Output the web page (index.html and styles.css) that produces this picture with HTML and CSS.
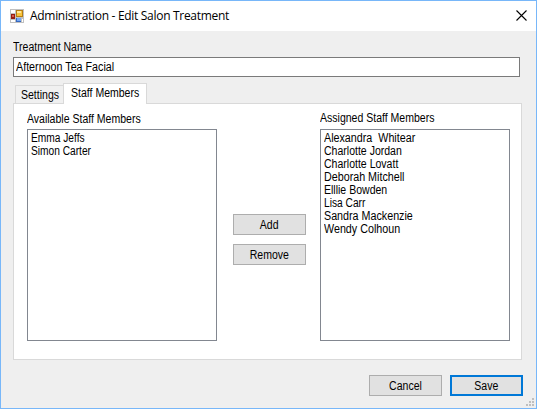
FILE: index.html
```html
<!DOCTYPE html>
<html lang="en">
<head>
<meta charset="utf-8">
<title>Administration - Edit Salon Treatment</title>
<link rel="stylesheet" href="styles.css">
</head>
<body>
<div class="window">
  <header class="titlebar">
    <svg class="app-icon" width="14" height="14" viewBox="0 0 14 14" shape-rendering="crispEdges">
      <path fill="#c0c0c0" d="M0 0h14v14H0z"/>
      <path fill="#fff" d="M1 1h4v3H1zM1 11h4v2H1zM12 10h1v3h-1z"/>
      <path fill="#b57d13" d="M6 1h7v7H6z"/>
      <path fill="#f8c43c" d="M7 2h5v5H7z"/>
      <path fill="#ffe79a" d="M7 2h4v2H7z"/>
      <path fill="#941c12" d="M1 5h4v5H1z"/>
      <path fill="#d85a4c" d="M2 6h2v2H2z"/>
      <path fill="#3568c0" d="M6 9h5v4H6z"/>
      <path fill="#75a8f4" d="M7 9h4v3H7z"/>
    </svg>
    <h1 class="title">Administration - Edit Salon Treatment</h1>
    <svg class="close" width="11" height="11" viewBox="0 0 11 11"><path d="M.5 .5l10 10M10.500 .5l-10 10" stroke="#000" stroke-width="1.100" fill="none"/></svg>
  </header>
  <main class="content">
    <div class="field-label"><span class="text">Treatment Name</span></div>
    <div class="field"><span class="text wide">Afternoon Tea Facial</span></div>
    <nav class="tabs">
      <div class="tab"><span class="text">Settings</span></div>
      <div class="tab active"><span class="text">Staff Members</span></div>
    </nav>
    <section class="panel">
      <div class="column">
        <div class="list-label lower"><span class="text">Available Staff Members</span></div>
        <ul class="list">
          <li><span class="text snug">Emma Jeffs</span></li>
          <li><span class="text snug">Simon Carter</span></li>
        </ul>
      </div>
      <div class="transfer">
        <button class="button"><span class="text">Add</span></button>
        <button class="button"><span class="text">Remove</span></button>
      </div>
      <div class="column">
        <div class="list-label"><span class="text">Assigned Staff Members</span></div>
        <ul class="list">
          <li><span class="text wide">Alexandra  Whitear</span></li>
          <li><span class="text">Charlotte Jordan</span></li>
          <li><span class="text">Charlotte Lovatt</span></li>
          <li><span class="text wide">Deborah Mitchell</span></li>
          <li><span class="text">Elllie Bowden</span></li>
          <li><span class="text snug">Lisa Carr</span></li>
          <li><span class="text wide">Sandra Mackenzie</span></li>
          <li><span class="text wide">Wendy Colhoun</span></li>
        </ul>
      </div>
    </section>
    <footer class="actions">
      <button class="button"><span class="text">Cancel</span></button>
      <button class="button primary"><span class="text">Save</span></button>
    </footer>
  </main>
  <svg class="grip" width="8" height="8" viewBox="0 0 8 8" shape-rendering="crispEdges"><path fill="#bfbfbf" d="M6 0h2v2H6zM3 3h2v2H3zM6 3h2v2H6zM0 6h2v2H0zM3 6h2v2H3zM6 6h2v2H6z"/></svg>
</div>
</body>
</html>
```
FILE: styles.css
```css
* { box-sizing: border-box; }
body { margin: 0; font: 12.5px/13px "Liberation Sans", sans-serif; color: #000; }
.window { position: relative; width: 537px; height: 409px; border: 1px solid #78b7f9; background: #efefef; }
.text { display: inline-block; vertical-align: top; white-space: pre; transform: scaleX(0.842); transform-origin: left; }
.text.snug { transform: scaleX(0.815); }
.text.wide { transform: scaleX(0.858); }
.titlebar { display: flex; align-items: center; height: 30px; padding: 0 9px; background: #fff; }
.app-icon { margin-top: -1px; }
.title { flex: 1; margin: 0 0 0 6px; font: 12px/16px "Open Sans", "Noto Sans", sans-serif; letter-spacing: -0.3px; }
.close { margin-top: -2px; }
.content { padding: 10px 13px 0 12px; }
.field-label { height: 16px; }
.field { width: 507px; height: 20px; padding: 3px 2px; border: 1px solid #7a7a7a; background: #fff; }
.tabs { display: flex; align-items: flex-end; height: 26px; padding-left: 2px; }
.tab { width: 48px; height: 18px; padding: 3px 0 0 5px; border: 1px solid #d9d9d9; border-width: 1px 0 0 1px; background: #f0f0f0; }
.tab.active { position: relative; width: 84px; height: 21px; margin-bottom: -1px; padding: 3px 0 0 7px; border-width: 1px 1px 0; background: #fff; }
.panel { display: flex; width: 509px; height: 257px; padding: 8px 11px 0 13px; border: 1px solid #d9d9d9; background: #fff; }
.column { width: 190px; }
.list-label { height: 17px; }
.list-label.lower { padding-top: 1px; }
.list { height: 212px; margin: 0; padding: 2px 3px; border: 1px solid #828790; list-style: none; }
.list li { height: 13px; }
.transfer { display: flex; flex-direction: column; gap: 9px; width: 103px; padding: 102px 0 0 16px; }
.button { flex: none; width: 73px; height: 21px; padding: 1px 0 0; border: 1px solid #adadad; background: #e1e1e1; font: inherit; color: #000; }
.button .text { transform-origin: center; }
.primary { border: 2px solid #0078d7; }
.actions { display: flex; gap: 8px; padding: 15px 0 0 356px; }
.grip { position: absolute; right: 2px; bottom: 2px; }
```
